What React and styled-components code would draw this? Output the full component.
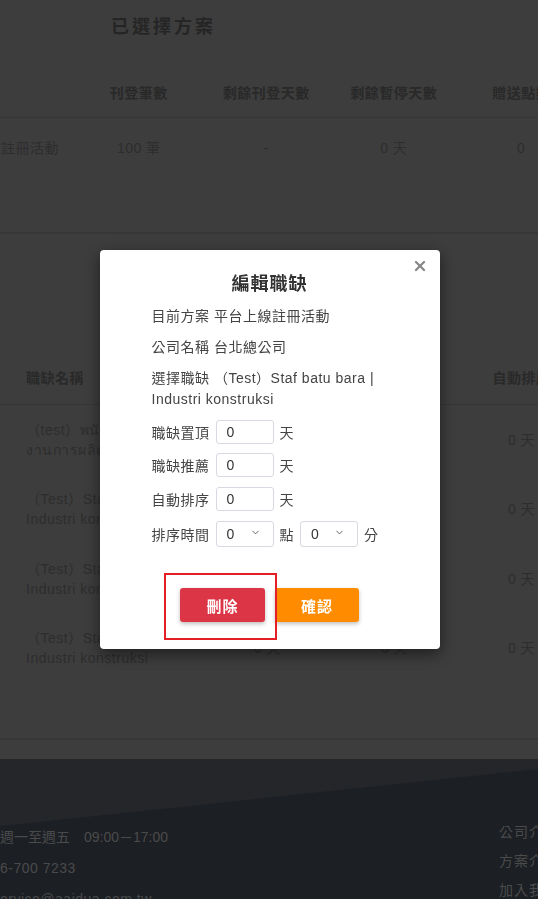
import React from 'react';
import styled, { createGlobalStyle } from 'styled-components';
import { ChevronDown, X } from 'lucide-react';

const GlobalStyle = createGlobalStyle`
	html, body {
		margin: 0;
		padding: 0;
		background: #7a7a7a;
		font-family: 'Liberation Sans', 'Noto Sans CJK TC', sans-serif;
	}
	* {
		box-sizing: border-box;
	}
`;

const Page = styled.div`
	width: 538px;
	min-height: 899px;
	overflow: hidden;
	background: #7a7a7a;
`;

const Section = styled.section`
	padding: ${(props) => props.pad};
	border-bottom: 2px solid #6e6e6e;
`;

const SectionTitle = styled.h2`
	margin: 0 0 28px 111px;
	font-size: 18px;
	line-height: 26px;
	font-weight: 700;
	letter-spacing: 3px;
	color: #4a4a4a;
`;

const PlanTable = styled.div`
	margin-left: -73px;
	width: 700px;
`;

const PlanRow = styled.div`
	display: grid;
	grid-template-columns: 148px repeat(4, 127.5px);
	align-items: center;
	height: ${(props) => (props.head ? '50px' : '60px')};
	border-bottom: ${(props) => (props.head ? '1px solid #6c6c6c' : 'none')};
`;

const Cell = styled.div`
	text-align: ${(props) => props.align || 'center'};
	font-size: 14px;
	line-height: 20px;
	font-weight: ${(props) => (props.head ? 700 : 400)};
	color: ${(props) => (props.head ? '#525252' : '#5a5a5a')};
	letter-spacing: 0.5px;
	white-space: ${(props) => (props.wrap ? 'normal' : 'nowrap')};
	padding: ${(props) => props.pad || '0'};
`;

const JobTable = styled.div`
	width: 720px;
`;

const JobRow = styled.div`
	display: grid;
	grid-template-columns: 204px repeat(4, 127px);
	align-items: center;
	height: ${(props) => (props.head ? '54px' : '69.5px')};
	border-bottom: ${(props) => (props.head ? '1px solid #6c6c6c' : 'none')};
`;

const Band = styled.div`
	height: 19px;
`;

const Footer = styled.footer`
	height: 160px;
	background: #383e48;
	overflow: hidden;
`;

const FooterShape = styled.svg`
	display: block;
	width: 538px;
	height: 70px;
`;

const FooterBody = styled.div`
	display: flex;
	justify-content: space-between;
`;

const FooterColumn = styled.div`
	display: flex;
	flex-direction: column;
	gap: ${(props) => props.gap};
	margin-top: ${(props) => props.top};
	width: ${(props) => props.width};
	overflow: hidden;
`;

const FooterText = styled.span`
	font-size: 14px;
	line-height: 20px;
	color: #949494;
	white-space: nowrap;
	letter-spacing: ${(props) => props.spacing || '0'};
`;

const Overlay = styled.div`
	position: fixed;
	inset: 0;
	background: rgba(0, 0, 0, 0.5);
	display: flex;
	align-items: center;
	justify-content: center;
`;

const Modal = styled.div`
	position: relative;
	width: 340px;
	margin-left: 1px;
	background: #fff;
	border-radius: 4px;
	box-shadow: 0 5px 15px rgba(0, 0, 0, 0.5);
	padding: 20px 52px 27px;
	color: #444;
`;

const CloseButton = styled.button`
	position: absolute;
	top: 8px;
	right: 12px;
	padding: 0;
	border: none;
	background: none;
	color: #888;
	display: flex;
	cursor: pointer;
`;

const Title = styled.h3`
	margin: 0 0 8px;
	text-align: center;
	font-size: 18px;
	line-height: 28px;
	font-weight: 700;
	letter-spacing: 1px;
	color: #333;
`;

const InfoLine = styled.p`
	margin: 0 0 10px;
	font-size: 14px;
	line-height: 21px;
	letter-spacing: 0.5px;
`;

const FieldRow = styled.div`
	display: flex;
	align-items: center;
	gap: 6px;
	margin-top: ${(props) => props.top || '10px'};
	font-size: 14px;
	letter-spacing: 0.5px;
`;

const NumberInput = styled.input`
	width: 58px;
	height: 24px;
	border: 1px solid #d6dae0;
	border-radius: 3px;
	padding: 0 10px;
	font-family: inherit;
	font-size: 14px;
	color: #333;
	outline: none;
`;

const SelectBox = styled.div`
	width: 58px;
	height: 26px;
	border: 1px solid #d6dae0;
	border-radius: 3px;
	padding: 0 12px 0 10px;
	display: flex;
	align-items: center;
	justify-content: space-between;
	font-size: 14px;
	color: #333;

	svg {
		margin-top: -4px;
	}
`;

const Actions = styled.div`
	display: flex;
	justify-content: center;
	gap: 10px;
	margin-top: 41px;
`;

const Marked = styled.div`
	position: relative;

	&::after {
		content: '';
		position: absolute;
		top: -15px;
		bottom: -18px;
		left: -16px;
		right: -12px;
		border: 2px solid #e31e24;
		pointer-events: none;
	}
`;

const ActionButton = styled.button`
	width: ${(props) => props.w};
	height: 34px;
	border: none;
	border-radius: 3px;
	background: ${(props) => props.color};
	color: #fff;
	font-family: inherit;
	font-size: 15px;
	font-weight: 700;
	letter-spacing: 1px;
	box-shadow: 0 2px 4px rgba(0, 0, 0, 0.25);
	cursor: pointer;
`;

const jobs = [
	'（test）พนักงานผลิต | งานการผลิต',
	'（Test）Staf batu bara | Industri konstruksi',
	'（Test）Staf batu bara | Industri konstruksi',
	'（Test）Staf batu bara | Industri konstruksi',
];

const App = () => {
	return (
		<>
			<GlobalStyle />
			<Page>
				<Section pad='14px 0 54px'>
					<SectionTitle>已選擇方案</SectionTitle>
					<PlanTable>
						<PlanRow head>
							<Cell head />
							<Cell head>刊登筆數</Cell>
							<Cell head>剩餘刊登天數</Cell>
							<Cell head>剩餘暫停天數</Cell>
							<Cell head>贈送點數</Cell>
						</PlanRow>
						<PlanRow>
							<Cell>平台上線註冊活動</Cell>
							<Cell>100 筆</Cell>
							<Cell>-</Cell>
							<Cell>0 天</Cell>
							<Cell>0</Cell>
						</PlanRow>
					</PlanTable>
				</Section>
				<Section pad='117px 0 55px'>
					<JobTable>
						<JobRow head>
							<Cell head align='left' pad='0 0 0 26px'>
								職缺名稱
							</Cell>
							<Cell head>職缺置頂</Cell>
							<Cell head>職缺推薦</Cell>
							<Cell head>自動排序</Cell>
							<Cell head>排序時間</Cell>
						</JobRow>
						{jobs.map((job, i) => (
							<JobRow key={i}>
								<Cell align='left' wrap pad='0 10px 0 26px'>
									{job}
								</Cell>
								<Cell>0 天</Cell>
								<Cell>0 天</Cell>
								<Cell>0 天</Cell>
								<Cell>0 點 0 分</Cell>
							</JobRow>
						))}
					</JobTable>
				</Section>
				<Band />
				<Footer>
					<FooterShape viewBox='0 0 538 70' preserveAspectRatio='none'>
						<polygon points='0,0 538,0 538,10 0,67' fill='#4a4d55' />
					</FooterShape>
					<FooterBody>
						<FooterColumn gap='11px' top='-2px' width='200px'>
							<FooterText>週一至週五　09:00－17:00</FooterText>
							<FooterText spacing='0.5px'>6-700 7233</FooterText>
							<FooterText spacing='0.5px'>ervice@aaidua.com.tw</FooterText>
						</FooterColumn>
						<FooterColumn gap='9px' top='-7px' width='39px'>
							<FooterText spacing='1px'>公司介紹</FooterText>
							<FooterText spacing='1px'>方案介紹</FooterText>
							<FooterText spacing='1px'>加入我們</FooterText>
						</FooterColumn>
					</FooterBody>
				</Footer>
			</Page>
			<Overlay>
				<Modal>
					<CloseButton aria-label='close'>
						<X size={16} strokeWidth={3.5} />
					</CloseButton>
					<Title>編輯職缺</Title>
					<InfoLine>目前方案 平台上線註冊活動</InfoLine>
					<InfoLine>公司名稱 台北總公司</InfoLine>
					<InfoLine>選擇職缺 （Test）Staf batu bara | Industri konstruksi</InfoLine>
					<FieldRow top='0'>
						職缺置頂
						<NumberInput defaultValue='0' />天
					</FieldRow>
					<FieldRow top='9px'>
						職缺推薦
						<NumberInput defaultValue='0' />天
					</FieldRow>
					<FieldRow>
						自動排序
						<NumberInput defaultValue='0' />天
					</FieldRow>
					<FieldRow top='10px'>
						排序時間
						<SelectBox>
							0 <ChevronDown size={11} strokeWidth={2} color='#555' />
						</SelectBox>
						<span>點</span>
						<SelectBox>
							0 <ChevronDown size={11} strokeWidth={2} color='#555' />
						</SelectBox>
						分
					</FieldRow>
					<Actions>
						<Marked>
							<ActionButton w='85px' color='#dc3545'>
								刪除
							</ActionButton>
						</Marked>
						<ActionButton w='84px' color='#ff8c00'>
							確認
						</ActionButton>
					</Actions>
				</Modal>
			</Overlay>
		</>
	);
};

export default App;
